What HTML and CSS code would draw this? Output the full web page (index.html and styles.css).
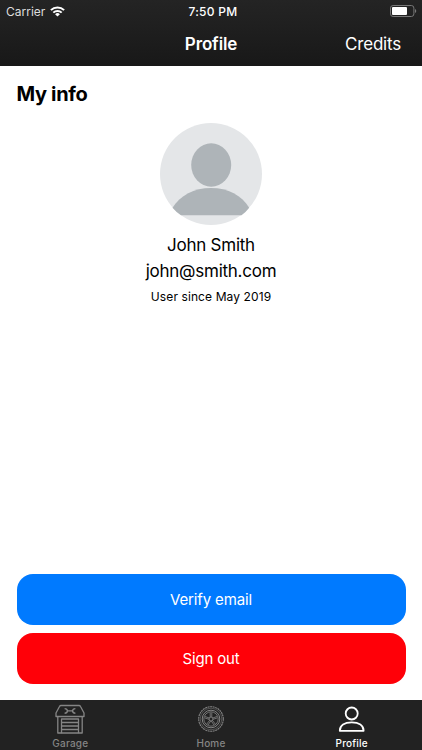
FILE: index.html
```
<!DOCTYPE html>
<html lang="en">
<head>
  <meta charset="utf-8">
  <meta name="viewport" content="width=device-width, initial-scale=1">
  <title>Profile</title>
  <link rel="stylesheet" href="styles.css">
</head>
<body>
<div class="app">
  <header class="header">
    <div class="status">
      <div class="carrier">
        <span>Carrier</span>
        <svg width="15" height="11" viewBox="0 0 15 11" fill="none" stroke="#fff" stroke-width="2">
          <path d="M.9 4.1a9.4 9.4 0 0 1 13.2 0M3.3 6.6a6 6 0 0 1 8.4 0"/>
          <path d="M7.5 10.6 5.1 8.2a3.4 3.4 0 0 1 4.8 0z" fill="#fff" stroke="none"/>
        </svg>
      </div>
      <span class="time">7:50 PM</span>
      <svg class="battery" width="27" height="12" viewBox="0 0 27 12">
        <rect x=".5" y=".5" width="23.4" height="11" rx="2.6" fill="none" stroke="#777"/>
        <rect x="2" y="2" width="15" height="8" rx="1" fill="#fff"/>
        <path d="M25 4v4c1.7-.7 1.7-3.3 0-4z" fill="#777"/>
      </svg>
    </div>
    <nav class="navbar">
      <h1>Profile</h1>
      <a href="#" class="credits">Credits</a>
    </nav>
  </header>

  <main class="content">
    <h2>My info</h2>
    <div class="user">
      <svg class="avatar" width="102" height="102" viewBox="0 0 102 102">
        <circle cx="51" cy="51" r="51" fill="#e4e6e8"/>
        <ellipse cx="51.2" cy="42" rx="20" ry="21.7" fill="#aeb4b8"/>
        <path d="M12.500 84.800C20 72.500 34 65 51 65S82 72.500 89.200 84.800Q86 89 81.500 92.300H21Q16 89 12.500 84.800z" fill="#aeb4b8"/>
      </svg>
      <p class="name">John Smith</p>
      <p class="email">john@smith.com</p>
      <p class="since">User since May 2019</p>
    </div>
    <div class="actions">
      <button class="btn verify"><span>Verify email</span></button>
      <button class="btn signout"><span>Sign out</span></button>
    </div>
  </main>

  <footer class="tabs">
    <a href="#" class="tab">
      <svg width="30" height="30" viewBox="0 0 30 30" fill="none" stroke="currentColor" stroke-width="1.3" stroke-linejoin="round">
        <path d="M6 1.500h18q1 0 1.500 1l3.500 6.500v3.500H1V9l3.500-6.500q.5-1 1.500-1zM2.800 12.500v16.500h3.700V15h17v14h3.700V12.500"/>
        <path d="M6.500 18.500h17M6.500 22h17M6.500 25.500h17M6.500 29h17"/>
        <path d="M9.600 4.600q2.600 0 2.900 2.300h5q.3-2.300 2.900-2.300M9.600 9.200q2.600 0 2.900-2.300M20.400 9.200q-2.600 0-2.900-2.300" stroke-width="1.400"/>
      </svg>
      <span>Garage</span>
    </a>
    <a href="#" class="tab">
      <svg width="30" height="30" viewBox="0 0 30 30" fill="none" stroke="currentColor">
        <circle cx="15" cy="15" r="12.300" stroke-width="1.1" stroke-dasharray="2 .576"/>
        <circle cx="15" cy="15" r="10.800" stroke-width=".5"/>
        <circle cx="15" cy="15" r="8.800"/>
        <circle cx="15" cy="15" r="7.200" stroke-width=".8"/>
        <circle cx="15" cy="15" r="2" stroke-width=".9"/>
        <path d="M14.200 13V8.500M15.800 13V8.500M16.700 14l4.300-1.500M17 15.300l4.300-1.400M16.400 16.400l2.900 3.700M15.300 17l2.700 4M13.600 16.400l-2.900 3.700M14.700 17 12 21M13.300 14 9 12.500M13 15.300l-4.300-1.400" stroke-width=".8"/>
      </svg>
      <span>Home</span>
    </a>
    <a href="#" class="tab active">
      <svg width="30" height="30" viewBox="0 0 30 30" fill="none" stroke="currentColor" stroke-width="1.8" stroke-linejoin="round">
        <circle cx="14.700" cy="9.500" r="6"/>
        <path d="M2.800 26.800C2.800 21.500 7.500 18.400 14.700 18.400S26.600 21.500 26.600 26.800z"/>
      </svg>
      <span>Profile</span>
    </a>
  </footer>
</div>
</body>
</html>
```
FILE: styles.css
```
* { box-sizing: border-box; }
body, h1, h2, p { margin: 0; }
body { font-family: Inter, "Liberation Sans", sans-serif; color: #000; background: #fff; }
a { text-decoration: none; color: inherit; }
svg { display: block; flex: none; }

.app { height: 750px; display: flex; flex-direction: column; }

/* header */
.header { height: 65.5px; background: linear-gradient(#242424, #181818); color: #fff; }
.status { height: 22px; display: grid; grid-template-columns: 1fr auto 1fr; align-items: center; padding: 0 5px 0 6px; font-size: 12px; }
.carrier { display: flex; align-items: center; gap: 5px; color: #ddd; }
.time { font-weight: 500; font-size: 12px; letter-spacing: .3px; padding-left: 3px; }
.battery { justify-self: end; }
.navbar { height: 43px; display: grid; grid-template-columns: 1fr auto 1fr; align-items: center; padding: 0 21px; }
.navbar h1 { grid-column: 2; font-size: 17px; line-height: 22px; font-weight: 600; letter-spacing: -.15px; }
.credits { justify-self: end; font-size: 17px; letter-spacing: -.2px; }

/* content */
.content { flex: 1; display: flex; flex-direction: column; padding: 16px 16.5px; }
.content h2 { font-size: 20px; line-height: 24px; font-weight: 700; letter-spacing: -.35px; }
.user { display: flex; flex-direction: column; align-items: center; padding-top: 17px; }
.name, .email { font-size: 17px; line-height: 26px; letter-spacing: -.25px; }
.name { margin-top: 7px; }
.since { font-size: 12px; line-height: 16px; letter-spacing: .1px; margin-top: 5px; }
.actions { margin-top: auto; display: flex; flex-direction: column; gap: 8px; }
.btn { height: 51px; border: 0; border-radius: 16px; color: #fff; font-family: inherit; font-size: 15px; letter-spacing: -.15px; }
.verify { background: #007aff; }
.signout { background: #ff0008; }

/* bottom tabs */
.tabs { height: 50.5px; display: flex; background: #222; }
.tab { flex: 1; display: flex; flex-direction: column; align-items: center; padding-top: 4px; font-size: 10px; line-height: 12px; font-weight: 500; letter-spacing: .2px; color: #858585; }
.tab span { margin-top: 3px; }
.tab.active { color: #fff; }
```
